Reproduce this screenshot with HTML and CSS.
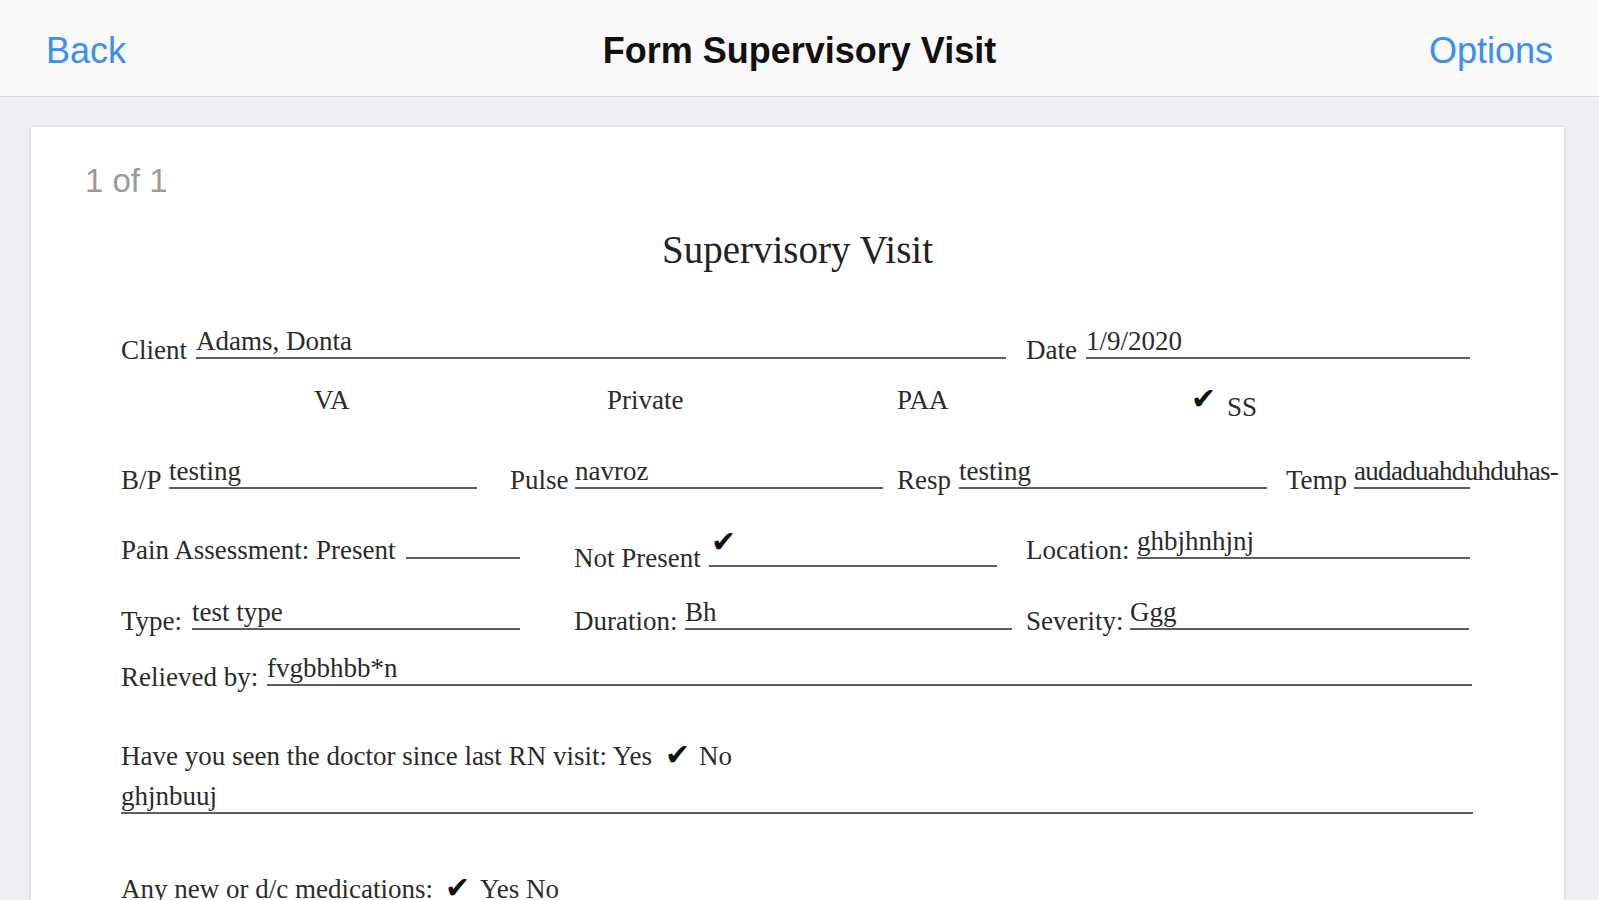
FILE: index.html
```html
<!DOCTYPE html>
<html lang="en">
<head>
<meta charset="utf-8">
<title>Form Supervisory Visit</title>
<link rel="stylesheet" href="styles.css">
</head>
<body>
<header class="nav">
  <a class="nav-btn nav-left">Back</a>
  <h1 class="nav-title">Form Supervisory Visit</h1>
  <a class="nav-btn nav-right">Options</a>
</header>
<main class="stage">
  <section class="card">
    <div class="pager">1 of 1</div>
    <div class="doc">
      <h2 class="doc-title">Supervisory Visit</h2>

      <div class="row h89">
        <span class="lbl w75">Client</span><span class="fld w810"><span class="val">Adams, Donta</span></span>
        <span class="lbl w60 g20">Date</span><span class="fld w384"><span class="val">1/9/2020</span></span>
      </div>

      <div class="row h50 opts">
        <span class="opt w293">VA</span>
        <span class="opt w290">Private</span>
        <span class="opt w294">PAA</span>
        <span class="opt-ss"><span class="chk chk-ss">✔</span>SS</span>
      </div>

      <div class="row h80">
        <span class="lbl w48">B/P</span><span class="fld w308"><span class="val">testing</span></span>
        <span class="lbl w65 g33">Pulse</span><span class="fld w308"><span class="val">navroz</span></span>
        <span class="lbl w62 g14">Resp</span><span class="fld w308"><span class="val">testing</span></span>
        <span class="lbl w68 g19">Temp</span><span class="fld w116"><span class="val tight">audaduahduhduhas-</span></span>
      </div>

      <div class="row h70">
        <span class="lbl w285">Pain Assessment: Present</span><span class="fld w114"><span class="val"></span></span>
        <span class="grp low g54"><span class="lbl w135">Not Present</span><span class="fld w288"><span class="val chk-val">✔</span></span></span>
        <span class="lbl w111 g29">Location:</span><span class="fld w333"><span class="val">ghbjhnhjnj</span></span>
      </div>

      <div class="row h71">
        <span class="lbl w71">Type:</span><span class="fld w328"><span class="val">test type</span></span>
        <span class="lbl w111 g54">Duration:</span><span class="fld w327"><span class="val">Bh</span></span>
        <span class="lbl w104 g14">Severity:</span><span class="fld w339"><span class="val">Ggg</span></span>
      </div>

      <div class="row h56">
        <span class="lbl w146">Relieved by:</span><span class="fld w1205"><span class="val">fvgbbhbb*n</span></span>
      </div>

      <div class="row h79">
        <span class="lbl">Have you seen the doctor since last RN visit: Yes<span class="chk chk-q1">✔</span>No</span>
      </div>

      <div class="row h49">
        <span class="fld w1352"><span class="val">ghjnbuuj</span></span>
      </div>

      <div class="row h84">
        <span class="lbl">Any new or d/c medications:<span class="chk chk-q2">✔</span>Yes No</span>
      </div>
    </div>
  </section>
</main>
</body>
</html>
```

FILE: styles.css
```css
* { box-sizing: border-box; }

html, body {
  margin: 0;
  padding: 0;
  width: 1599px;
  height: 900px;
  overflow: hidden;
  background: #efeff4;
}

.nav {
  height: 97px;
  background: #f9f9f9;
  border-bottom: 1px solid #dedee2;
  display: grid;
  grid-template-columns: 1fr auto 1fr;
  align-items: center;
  padding: 6px 46px 0 46px;
  font-family: "Liberation Sans", Arial, sans-serif;
}

.nav-btn {
  font-size: 36px;
  color: #3a8ef6;
  line-height: 1;
}

.nav-left { justify-self: start; }
.nav-right { justify-self: end; }

.nav-title {
  margin: 0;
  font-size: 36px;
  font-weight: 700;
  color: #111;
  line-height: 1;
}

.stage {
  padding: 30px 35px 0 31px;
}

.card {
  background: #fff;
  height: 900px;
  box-shadow: 0 0 3px rgba(0, 0, 0, 0.18);
  overflow: hidden;
  padding-top: 34px;
}

.pager {
  font-family: "Liberation Sans", Arial, sans-serif;
  font-size: 33px;
  line-height: 40px;
  color: #9a9a9a;
  padding-left: 54px;
}

.doc {
  font-family: "Liberation Serif", "Times New Roman", serif;
  font-size: 27px;
  color: #2b2b2b;
  padding-left: 90px;
}

.doc-title {
  margin: 26px 0 0 0;
  font-weight: 400;
  font-size: 39px;
  line-height: 46px;
  text-align: center;
  padding-right: 90px;
  color: #222;
}

.row {
  display: flex;
  align-items: flex-end;
  white-space: nowrap;
}

.h89 { height: 91px; }
.h50 { height: 50px; }
.h80 { height: 80px; }
.h70 { height: 70px; }
.h71 { height: 71px; }
.h56 { height: 56px; }
.h79 { height: 79px; }
.h49 { height: 49px; }
.h84 { height: 84px; }

.lbl {
  display: block;
  flex: none;
  line-height: 27px;
}

.fld {
  display: block;
  flex: none;
  border-bottom: 2px solid #5e5e5e;
  margin-bottom: 5px;
  padding-bottom: 2px;
  line-height: 27px;
  height: 31px;
}

.val {
  display: block;
  line-height: 27px;
  white-space: nowrap;
}

.tight { letter-spacing: -0.7px; }

.grp {
  display: flex;
  align-items: flex-end;
  flex: none;
}

.low { margin-bottom: -8px; }

.chk {
  display: inline-block;
  font-family: "DejaVu Sans", sans-serif;
  font-size: 30px;
  line-height: 27px;
  color: #111;
}

.chk-q1 { margin: 0 9px 0 13px; }
.chk-q2 { margin: 0 10px 0 12px; }

.chk-val {
  font-family: "DejaVu Sans", sans-serif;
  font-size: 30px;
  color: #111;
  padding-left: 2px;
  margin-top: -8px;
}

.opts { padding-left: 193px; }

.opt {
  display: block;
  flex: none;
  line-height: 27px;
}

.opt-ss {
  display: block;
  flex: none;
  line-height: 27px;
  margin-bottom: -7px;
}

.chk-ss {
  width: 36px;
  position: relative;
  top: -7px;
}

.w48 { width: 48px; }
.w60 { width: 60px; }
.w62 { width: 62px; }
.w65 { width: 65px; }
.w68 { width: 68px; }
.w71 { width: 71px; }
.w75 { width: 75px; }
.w104 { width: 104px; }
.w111 { width: 111px; }
.w114 { width: 114px; }
.w116 { width: 116px; }
.w135 { width: 135px; }
.w146 { width: 146px; }
.w285 { width: 285px; }
.w288 { width: 288px; }
.w290 { width: 290px; }
.w293 { width: 293px; }
.w294 { width: 294px; }
.w308 { width: 308px; }
.w327 { width: 327px; }
.w328 { width: 328px; }
.w333 { width: 333px; }
.w339 { width: 339px; }
.w384 { width: 384px; }
.w810 { width: 810px; }
.w1205 { width: 1205px; }
.w1352 { width: 1352px; }

.g14 { margin-left: 14px; }
.g19 { margin-left: 19px; }
.g20 { margin-left: 20px; }
.g29 { margin-left: 29px; }
.g33 { margin-left: 33px; }
.g54 { margin-left: 54px; }
```
